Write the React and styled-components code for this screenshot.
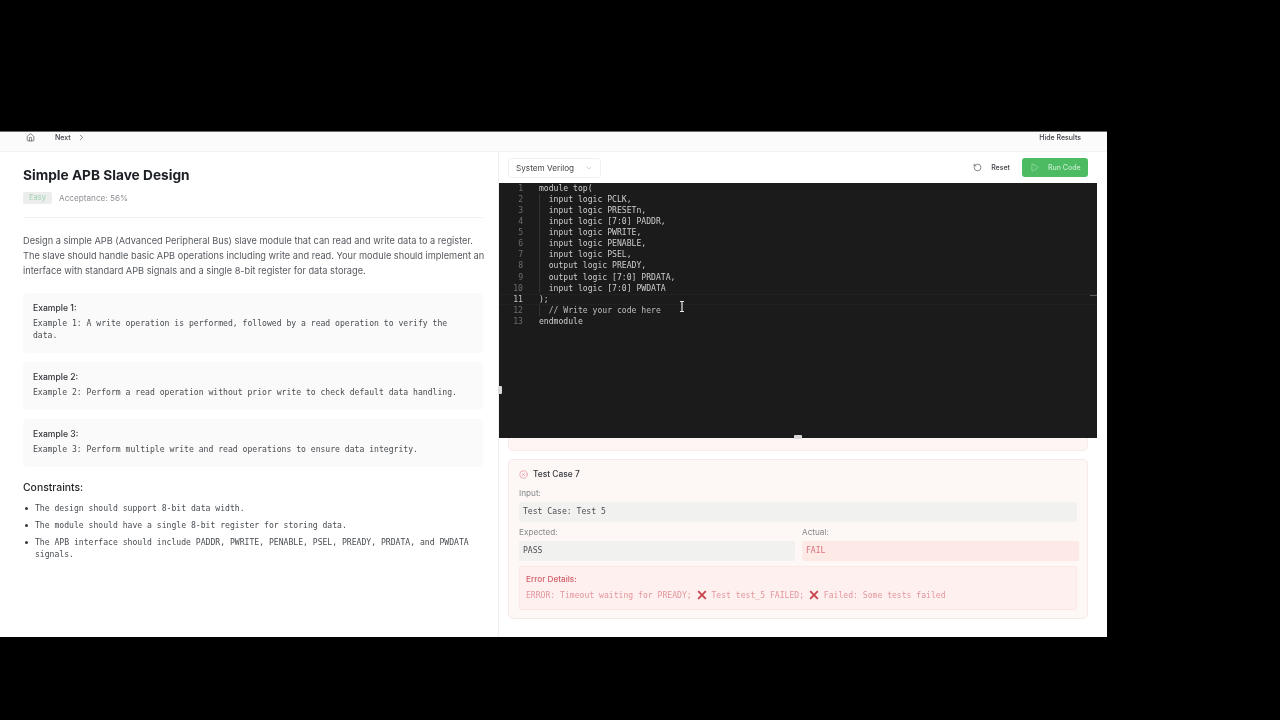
import React from "react";
import styled, { createGlobalStyle } from "styled-components";
import { Home, ChevronRight, ChevronDown, RotateCcw, Play, CircleX } from "lucide-react";

const GlobalStyle = createGlobalStyle`
  html, body { margin: 0; padding: 0; background: #000; }
  body { font-family: Inter, "Liberation Sans", sans-serif; }
`;

const MONO = `"DejaVu Sans Mono", "Liberation Mono", monospace`;

const Page = styled.div`
  width: 1280px;
  height: 720px;
  padding-top: 131px;
  box-sizing: border-box;
  background: #000;
  overflow: hidden;
`;

// the reference is a soft video frame, so the whole window gets a slight blur
const Frame = styled.div`
  width: 1107px;
  height: 506px;
  background: #fff;
  border-top: 1px solid #6b6b6b;
  box-sizing: border-box;
  display: flex;
  flex-direction: column;
  overflow: hidden;
  position: relative;
  filter: blur(0.3px);
`;

const TopBar = styled.div`
  height: 20px;
  flex: none;
  display: flex;
  align-items: center;
  padding: 0 26px 8px 26px;
  box-sizing: border-box;
  background: #fbfbfb;
  border-bottom: 1px solid #f3f3f3;
  font-size: 7px;
  font-weight: 500;
  color: #3a3d42;
`;

const NextLink = styled.span`
  display: flex;
  align-items: center;
  gap: 6.5px;
  margin-left: 20px;
`;

const HideResults = styled.span`
  margin-left: auto;
`;

const Columns = styled.div`
  flex: 1;
  display: flex;
  min-height: 0;
`;

const LeftPanel = styled.div`
  width: 499px;
  flex: none;
  box-sizing: border-box;
  padding: 15px 15px 0 23px;
  border-right: 1px solid #f0f0f0;
`;

const Title = styled.h1`
  margin: 0;
  font-size: 13.7px;
  line-height: 17px;
  font-weight: 700;
  color: #1c1f24;
`;

const MetaRow = styled.div`
  display: flex;
  align-items: center;
  gap: 7px;
  margin-top: 8px;
  font-size: 8.2px;
  color: #8d9196;
`;

const Badge = styled.span`
  width: 29px;
  height: 12px;
  line-height: 12px;
  text-align: center;
  border-radius: 2px;
  background: #eceeed;
  color: #9fd0b2;
  font-size: 7.5px;
`;

const Divider = styled.div`
  height: 1px;
  background: #f2f2f2;
  margin-top: 13px;
`;

const Description = styled.p`
  margin: 15px 0 0;
  font-size: 9.21px;
  line-height: 15px;
  color: #55595e;
  white-space: nowrap;
`;

const ExampleList = styled.div`
  display: flex;
  flex-direction: column;
  gap: 9px;
  margin-top: 15px;
`;

const ExampleCard = styled.div`
  background: #fafafa;
  border-radius: 4px;
  padding: 9px 10px 11.5px;
`;

const ExampleLabel = styled.div`
  font-size: 8.6px;
  line-height: 12px;
  font-weight: 500;
  color: #2f3237;
`;

const ExampleText = styled.div`
  margin-top: 4px;
  font-family: ${MONO};
  font-size: 8.1px;
  line-height: 11.7px;
  color: #484c51;
`;

const SectionTitle = styled.h2`
  margin: 13.5px 0 0;
  font-size: 10.4px;
  line-height: 14px;
  font-weight: 500;
  color: #25282c;
`;

const ConstraintList = styled.ul`
  list-style: none;
  margin: 7px 0 0;
  padding: 0;
  display: flex;
  flex-direction: column;
  gap: 5px;
`;

const Constraint = styled.li`
  position: relative;
  padding-left: 12px;
  font-family: ${MONO};
  font-size: 8.1px;
  line-height: 12px;
  color: #484c51;

  &::before {
    content: "";
    position: absolute;
    left: 2px;
    top: 5px;
    width: 3px;
    height: 3px;
    border-radius: 50%;
    background: #33363a;
  }
`;

const RightPanel = styled.div`
  flex: 1;
  min-width: 0;
  display: flex;
  flex-direction: column;
  position: relative;
`;

const Toolbar = styled.div`
  height: 31px;
  flex: none;
  display: flex;
  align-items: center;
  padding: 0 19px 0 9px;
  box-sizing: border-box;
`;

const LangSelect = styled.div`
  width: 93px;
  height: 20px;
  box-sizing: border-box;
  display: flex;
  align-items: center;
  justify-content: space-between;
  padding: 0 7px;
  border: 1px solid #f0f0f0;
  border-radius: 3px;
  font-size: 8.2px;
  color: #44484d;
`;

const ResetButton = styled.span`
  display: flex;
  align-items: center;
  gap: 9.5px;
  margin-left: auto;
  font-size: 7px;
  font-weight: 500;
  color: #3c3f44;
`;

const RunButton = styled.span`
  width: 66px;
  height: 19px;
  margin-left: 12px;
  box-sizing: border-box;
  display: flex;
  align-items: center;
  gap: 9px;
  padding-left: 8px;
  border-radius: 3px;
  background: #4cbb62;
  color: #c2ecce;
  font-size: 7px;
  font-weight: 500;
  white-space: nowrap;
`;

const Editor = styled.div`
  width: 598px;
  height: 255px;
  flex: none;
  background: #1b1b1b;
  position: relative;
  overflow: hidden;
`;

const CodeLine = styled.div`
  height: 11.07px;
  line-height: 11.07px;
  display: flex;
  font-family: ${MONO};
  font-size: 8.1px;
  color: ${(p) => (p.$comment ? "#bdbdbd" : "#cdcdcd")};
  white-space: pre;
  box-shadow: ${(p) => (p.$active ? "inset 0 1px 0 #212121, inset 0 -1px 0 #212121" : "none")};
`;

const LineNumber = styled.span`
  width: 24px;
  flex: none;
  text-align: right;
  margin-right: 16px;
  color: ${(p) => (p.$active ? "#c4c4c4" : "#6d6d6d")};
`;

const IndentGuide = styled.div`
  position: absolute;
  left: 40px;
  top: ${(p) => p.$top}px;
  width: 1px;
  height: ${(p) => p.$height}px;
  background: #333;
`;

const OverviewMark = styled.div`
  position: absolute;
  right: 0;
  top: 112px;
  width: 7px;
  height: 1px;
  background: #5a5a5a;
`;

const TextCursor = styled.svg`
  position: absolute;
  left: 180px;
  top: 118px;
`;

const HandleH = styled.div`
  position: absolute;
  left: 295px;
  top: 283px;
  width: 8px;
  height: 4px;
  border-radius: 1px;
  background: #d8d8d8;
`;

const HandleV = styled.div`
  position: absolute;
  left: -1px;
  top: 234px;
  width: 4px;
  height: 8px;
  border-radius: 1px;
  background: #d8d8d8;
`;

const Results = styled.div`
  flex: 1;
  min-height: 0;
  padding: 0 19px 0 9px;
  display: flex;
  flex-direction: column;
  gap: 8px;
  overflow: hidden;
`;

const PrevCardEnd = styled.div`
  height: 13px;
  flex: none;
  box-sizing: border-box;
  background: #fdf6f5;
  border: 1px solid #f8ebe9;
  border-top: none;
  border-radius: 0 0 5px 5px;
`;

const TestCard = styled.div`
  height: 160px;
  flex: none;
  box-sizing: border-box;
  padding: 8px 10px 0;
  background: #fdf7f6;
  border: 1px solid #f7e9e7;
  border-radius: 5px;
`;

const CardHeader = styled.div`
  display: flex;
  align-items: center;
  gap: 5px;
  font-size: 8.4px;
  line-height: 12px;
  font-weight: 500;
  color: #33363b;
`;

const FieldLabel = styled.div`
  font-size: 8.2px;
  line-height: 11px;
  color: #85888c;
  margin-top: ${(p) => p.$top || 0}px;
  margin-bottom: 3px;
`;

const ValueBox = styled.div`
  height: 20px;
  line-height: 19px;
  padding: 0 4px;
  border-radius: 2px;
  font-family: ${MONO};
  font-size: 8.1px;
  background: ${(p) => (p.$fail ? "#fde9e6" : "#f1f1f0")};
  color: ${(p) => (p.$fail ? "#d9737d" : "#4b4e53")};
`;

const CompareRow = styled.div`
  display: grid;
  grid-template-columns: 276px 277px;
  gap: 7px;
`;

const ErrorBox = styled.div`
  height: 44px;
  margin-top: 5px;
  box-sizing: border-box;
  padding: 6px 6px 0;
  background: #fef0ee;
  border: 1px solid #fbe8e5;
  border-radius: 2px;
`;

const ErrorTitle = styled.div`
  font-size: 8.2px;
  line-height: 12px;
  font-weight: 500;
  color: #d0606b;
`;

const ErrorText = styled.div`
  display: flex;
  align-items: center;
  margin-top: 4px;
  font-family: ${MONO};
  font-size: 8.1px;
  line-height: 12px;
  color: #e3969c;
  white-space: pre;
`;

const ErrorMarkIcon = styled.svg`
  width: 10px;
  height: 10px;
  flex: none;
`;

const ErrorMark = () => (
  <ErrorMarkIcon viewBox="0 0 10 10">
    <path d="M1.2 1.2 8.8 8.8M8.8 1.2 1.2 8.8" stroke="#c8454e" strokeWidth="1.9" fill="none" />
  </ErrorMarkIcon>
);

const examples = [
  "Example 1: A write operation is performed, followed by a read operation to verify the data.",
  "Example 2: Perform a read operation without prior write to check default data handling.",
  "Example 3: Perform multiple write and read operations to ensure data integrity.",
];

const constraints = [
  "The design should support 8-bit data width.",
  "The module should have a single 8-bit register for storing data.",
  "The APB interface should include PADDR, PWRITE, PENABLE, PSEL, PREADY, PRDATA, and PWDATA signals.",
];

const code = [
  "module top(",
  "  input logic PCLK,",
  "  input logic PRESETn,",
  "  input logic [7:0] PADDR,",
  "  input logic PWRITE,",
  "  input logic PENABLE,",
  "  input logic PSEL,",
  "  output logic PREADY,",
  "  output logic [7:0] PRDATA,",
  "  input logic [7:0] PWDATA",
  ");",
  "  // Write your code here",
  "endmodule",
];

const App = () => (
  <Page>
    <GlobalStyle />
    <Frame>
      <TopBar>
        <Home size={9} strokeWidth={1.6} />
        <NextLink>
          Next <ChevronRight size={9} strokeWidth={1.6} />
        </NextLink>
        <HideResults>Hide Results</HideResults>
      </TopBar>
      <Columns>
        <LeftPanel>
          <Title>Simple APB Slave Design</Title>
          <MetaRow>
            <Badge>Easy</Badge>
            <span>Acceptance: 56%</span>
          </MetaRow>
          <Divider />
          <Description>
            Design a simple APB (Advanced Peripheral Bus) slave module that can read and write data to a register.
            <br />
            The slave should handle basic APB operations including write and read. Your module should implement an
            <br />
            interface with standard APB signals and a single 8-bit register for data storage.
          </Description>
          <ExampleList>
            {examples.map((text, i) => (
              <ExampleCard key={i}>
                <ExampleLabel>Example {i + 1}:</ExampleLabel>
                <ExampleText>{text}</ExampleText>
              </ExampleCard>
            ))}
          </ExampleList>
          <SectionTitle>Constraints:</SectionTitle>
          <ConstraintList>
            {constraints.map((text) => (
              <Constraint key={text}>{text}</Constraint>
            ))}
          </ConstraintList>
        </LeftPanel>
        <RightPanel>
          <Toolbar>
            <LangSelect>
              System Verilog
              <ChevronDown size={8} strokeWidth={1.4} color="#9a9a9a" />
            </LangSelect>
            <ResetButton>
              <RotateCcw size={9} strokeWidth={1.6} />
              Reset
            </ResetButton>
            <RunButton>
              <Play size={9} strokeWidth={1.4} />
              Run Code
            </RunButton>
          </Toolbar>
          <Editor>
            {code.map((line, i) => (
              <CodeLine key={i} $active={i === 10} $comment={i === 11}>
                <LineNumber $active={i === 10}>{i + 1}</LineNumber>
                {line}
              </CodeLine>
            ))}
            <IndentGuide $top={11} $height={99} />
            <IndentGuide $top={122} $height={11} />
            <OverviewMark />
            <TextCursor width="6" height="11" viewBox="0 0 6 11">
              <path d="M1 .5h4M1 10.5h4M3 .5v10" stroke="#e8e8e8" strokeWidth="1.2" fill="none" />
            </TextCursor>
          </Editor>
          <Results>
            <PrevCardEnd />
            <TestCard>
              <CardHeader>
                <CircleX size={9} strokeWidth={1.4} color="#e0737d" />
                Test Case 7
              </CardHeader>
              <FieldLabel $top={8}>Input:</FieldLabel>
              <ValueBox>Test Case: Test 5</ValueBox>
              <CompareRow>
                <div>
                  <FieldLabel $top={5}>Expected:</FieldLabel>
                  <ValueBox>PASS</ValueBox>
                </div>
                <div>
                  <FieldLabel $top={5}>Actual:</FieldLabel>
                  <ValueBox $fail>FAIL</ValueBox>
                </div>
              </CompareRow>
              <ErrorBox>
                <ErrorTitle>Error Details:</ErrorTitle>
                <ErrorText>
                  {"ERROR: Timeout waiting for PREADY; "}
                  <ErrorMark />
                  {" Test test_5 FAILED; "}
                  <ErrorMark />
                  {" Failed: Some tests failed"}
                </ErrorText>
              </ErrorBox>
            </TestCard>
          </Results>
          <HandleH />
          <HandleV />
        </RightPanel>
      </Columns>
    </Frame>
  </Page>
);

export default App;
